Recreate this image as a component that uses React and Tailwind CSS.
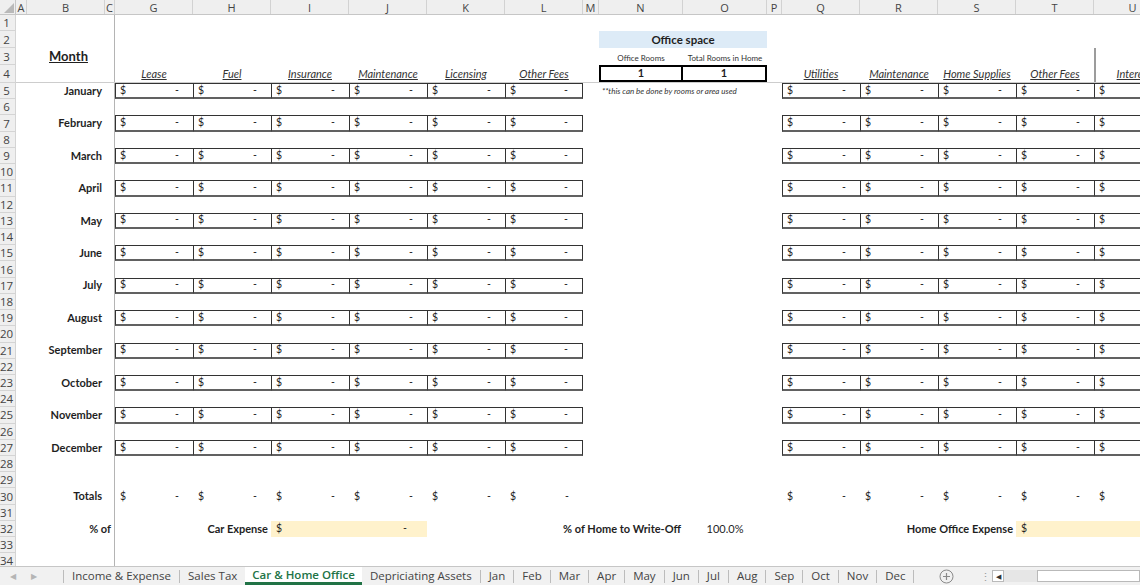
import React from "react";

const COLS = [
  { id: "A", w: "w-[11px]" },
  { id: "B", w: "w-[78px]" },
  { id: "C", w: "w-[10px]" },
  { id: "G", w: "w-[78px]" },
  { id: "H", w: "w-[78px]" },
  { id: "I", w: "w-[78px]" },
  { id: "J", w: "w-[78px]" },
  { id: "K", w: "w-[78px]" },
  { id: "L", w: "w-[78px]" },
  { id: "M", w: "w-[16px]" },
  { id: "N", w: "w-[84px]" },
  { id: "O", w: "w-[84px]" },
  { id: "P", w: "w-[15px]" },
  { id: "Q", w: "w-[78px]" },
  { id: "R", w: "w-[78px]" },
  { id: "S", w: "w-[78px]" },
  { id: "T", w: "w-[78px]" },
  { id: "U", w: "w-[78px]" },
];

const months = [
  "January", "February", "March", "April", "May", "June",
  "July", "August", "September", "October", "November", "December",
];

const carHeads = ["Lease", "Fuel", "Insurance", "Maintenance", "Licensing", "Other Fees"];
const homeHeads = ["Utilities", "Maintenance", "Home Supplies", "Other Fees", "Interest"];

const tabs = [
  "Income & Expense", "Sales Tax", "Car & Home Office", "Depriciating Assets",
  "Jan", "Feb", "Mar", "Apr", "May", "Jun", "Jul", "Aug", "Sep", "Oct", "Nov", "Dec",
];

function ColHeader() {
  return (
    <div className="flex h-[15px] shrink-0 bg-[#efefef] border-b border-[#c6c6c6] font-['Open_Sans',sans-serif] text-[11px] text-[#444] leading-[13px]">
      <div className="w-[16px] shrink-0 relative border-r border-[#c6c6c6]">
        <svg className="absolute right-[1px] bottom-[1px]" width="10" height="10" viewBox="0 0 10 10">
          <polygon points="10,0 10,10 0,10" fill="#b9b9b9" />
        </svg>
      </div>
      {COLS.map((c) => (
        <div key={c.id} className={`${c.w} shrink-0 flex items-center justify-center border-r border-[#d2d2d2]`}>
          {c.id}
        </div>
      ))}
    </div>
  );
}

function RowHead({ n }) {
  return (
    <div className="w-[16px] shrink-0 bg-[#efefef] border-r border-b border-[#d4d4d4] flex items-center font-['Open_Sans',sans-serif] text-[11.5px] text-[#444] leading-[13px]">
      <span className="w-[13px] text-center">{n}</span>
    </div>
  );
}

// A, B and C are the same on every row: B carries the label, C the frozen pane line
function Row({ n, h = "h-[16.22px]", b, bCls = "justify-end pr-[3px] font-bold text-[11px]", wide, line, children }) {
  return (
    <div className={`flex shrink-0 ${h}`}>
      <RowHead n={n} />
      <div className={`flex flex-1 ${line ? "border-b border-b-[#cdcdcd]" : ""}`}>
        <div className="w-[11px] shrink-0" />
        {wide ? (
          <div className="w-[88px] shrink-0 flex items-center justify-end pr-[3px] font-bold text-[11px] border-r border-r-[#b4b4b4]">
            {b}
          </div>
        ) : (
          <>
            <div className={`w-[78px] shrink-0 flex items-center ${bCls}`}>{b}</div>
            <div className="w-[10px] shrink-0 border-r border-r-[#b4b4b4]" />
          </>
        )}
        {children}
      </div>
    </div>
  );
}

function Money({ box = true, last }) {
  return (
    <div
      className={`w-[78px] shrink-0 flex items-center justify-between pl-[4px] pr-[14px] text-[10.5px] text-[#222] ${
        box ? "border-l border-t border-b-2 border-l-[#333] border-t-[#333] border-b-[#616161]" : "pl-[5px]"
      } ${last ? "border-r border-r-[#333]" : ""}`}
    >
      <span>$</span>
      <span>-</span>
    </div>
  );
}

function Head({ children, w = "w-[78px]" }) {
  return (
    <div className={`${w} shrink-0 flex items-center justify-center pt-[1px] italic underline text-[11px] text-[#333] whitespace-nowrap`}>
      {children}
    </div>
  );
}

function Gap({ w }) {
  return <div className={`${w} shrink-0`} />;
}

function MonthRow({ n, month, note }) {
  return (
    <Row n={n} b={month}>
      {carHeads.map((h, i) => (
        <Money key={h} last={i === carHeads.length - 1} />
      ))}
      <Gap w="w-[16px]" />
      {note ? (
        <div className="w-[168px] shrink-0 flex items-center pl-[3px] italic text-[8px] text-[#333] whitespace-nowrap">
          **this can be done by rooms or area used
        </div>
      ) : (
        <Gap w="w-[168px]" />
      )}
      <Gap w="w-[15px]" />
      {homeHeads.map((h) => (
        <Money key={h} />
      ))}
    </Row>
  );
}

function TotalsRow({ n }) {
  return (
    <Row n={n} b="Totals">
      {carHeads.map((h) => (
        <Money key={h} box={false} />
      ))}
      <Gap w="w-[199px]" />
      {homeHeads.map((h) => (
        <Money key={h} box={false} />
      ))}
    </Row>
  );
}

function TabBar() {
  return (
    <div className="h-[19px] shrink-0 flex items-stretch border-t border-[#c6c6c6] bg-[#f1f1f1] font-['Open_Sans',sans-serif] text-[11.5px] text-[#444] leading-none">
      <div className="w-[63px] shrink-0 flex items-center gap-[15px] pl-[10px] text-[8px] text-[#b5b5b5]">
        <span>◀</span>
        <span>▶</span>
      </div>
      <span className="w-px h-[13px] self-center bg-[#bcbcbc]" />
      {tabs.map((t, i) => {
        const active = t === "Car & Home Office";
        const nextActive = tabs[i + 1] === "Car & Home Office";
        if (active) {
          return (
            <div key={t} className="flex items-center px-[7px] bg-white border-b-[3px] border-[#217346] text-[#217346] font-semibold">
              {t}
            </div>
          );
        }
        return (
          <React.Fragment key={t}>
            <div className="flex items-center px-[8px]">{t}</div>
            {!nextActive && <span className="w-px h-[13px] self-center bg-[#bcbcbc]" />}
          </React.Fragment>
        );
      })}
      <div className="w-[64px] shrink-0 flex items-center justify-center">
        <svg width="15" height="15" viewBox="0 0 15 15">
          <circle cx="7.5" cy="7.5" r="6.5" fill="none" stroke="#8a8a8a" strokeWidth="1" />
          <path d="M7.5 4v7M4 7.5h7" stroke="#8a8a8a" strokeWidth="1.2" />
        </svg>
      </div>
      <div className="w-[14px] shrink-0 flex items-center justify-center text-[#999] text-[11px]">⋮</div>
      <div className="w-[12px] shrink-0 my-[3px] flex items-center justify-center border border-[#b9b9b9] bg-white text-[7px] text-[#333]">
        ◀
      </div>
      <div className="w-[33px] shrink-0 my-[3px] bg-[#e6e6e6]" />
      <div className="flex-1 my-[3px] bg-white border border-[#b9b9b9]" />
    </div>
  );
}

export default function App() {
  const rows = [];
  for (let n = 5; n <= 28; n++) {
    if (n % 2 === 1) {
      rows.push(<MonthRow key={n} n={n} month={months[(n - 5) / 2]} note={n === 5} />);
    } else {
      rows.push(<Row key={n} n={n} />);
    }
  }

  return (
    <div className="w-[1140px] h-[585px] overflow-hidden bg-white flex flex-col font-['Lato','Open_Sans',sans-serif] text-[#1f1f1f]">
      <ColHeader />
      <div className="flex-1 min-h-0 overflow-hidden flex flex-col">
        <Row n={1} h="h-[16px]" />
        <Row n={2} h="h-[17px]">
          <Gap w="w-[484px]" />
          <div className="w-[168px] shrink-0 flex items-center justify-center bg-[#ddebf7] font-bold text-[11.5px]">
            Office space
          </div>
        </Row>
        <Row n={3} h="h-[17px]" b="Month" bCls="justify-center pl-[5px] font-bold underline text-[13px]">
          <Gap w="w-[484px]" />
          <div className="w-[84px] shrink-0 flex items-end justify-center pb-[1px] text-[8px] text-[#333]">Office Rooms</div>
          <div className="w-[84px] shrink-0 flex items-end justify-center pb-[1px] text-[8px] text-[#333] whitespace-nowrap">
            Total Rooms in Home
          </div>
          <Gap w="w-[327px]" />
          <div className="w-[78px] shrink-0 border-l-2 border-l-[#9c9c9c]" />
        </Row>
        <Row n={4} h="h-[18px]" line>
          {carHeads.map((h) => (
            <Head key={h}>{h}</Head>
          ))}
          <Gap w="w-[16px]" />
          <div className="w-[84px] shrink-0 flex items-center justify-center border-2 border-black font-bold text-[11px]">1</div>
          <div className="w-[84px] shrink-0 flex items-center justify-center border-2 border-l-0 border-black font-bold text-[11px]">1</div>
          <Gap w="w-[15px]" />
          {homeHeads.slice(0, 4).map((h) => (
            <Head key={h}>{h}</Head>
          ))}
          <div className="w-[78px] shrink-0 flex items-center justify-center pt-[1px] border-l-2 border-l-[#9c9c9c] italic underline text-[11px] text-[#333] whitespace-nowrap">
            Interest
          </div>
        </Row>
        {rows}
        <Row n={29} />
        <TotalsRow n={30} />
        <Row n={31} />
        <Row n={32} b="% of" wide>
          <Gap w="w-[78px]" />
          <div className="w-[78px] shrink-0 flex items-center justify-end pr-[3px] font-bold text-[11px] whitespace-nowrap">
            Car Expense
          </div>
          <div className="w-[156px] shrink-0 flex items-center justify-between pl-[5px] pr-[20px] bg-[#fff2cc] text-[10.5px]">
            <span>$</span>
            <span>-</span>
          </div>
          <Gap w="w-[172px]" />
          <div className="w-[84px] shrink-0 flex items-center justify-end pr-[2px] font-bold text-[11px] whitespace-nowrap">
            % of Home to Write-Off
          </div>
          <div className="w-[84px] shrink-0 flex items-center justify-center text-[11px]">100.0%</div>
          <Gap w="w-[171px]" />
          <div className="w-[78px] shrink-0 flex items-center justify-end pr-[3px] font-bold text-[11px] whitespace-nowrap">
            Home Office Expense
          </div>
          <div className="w-[156px] shrink-0 flex items-center pl-[5px] bg-[#fff2cc] text-[10.5px]">
            <span>$</span>
          </div>
        </Row>
        <Row n={33} />
        <Row n={34} />
      </div>
      <TabBar />
    </div>
  );
}
